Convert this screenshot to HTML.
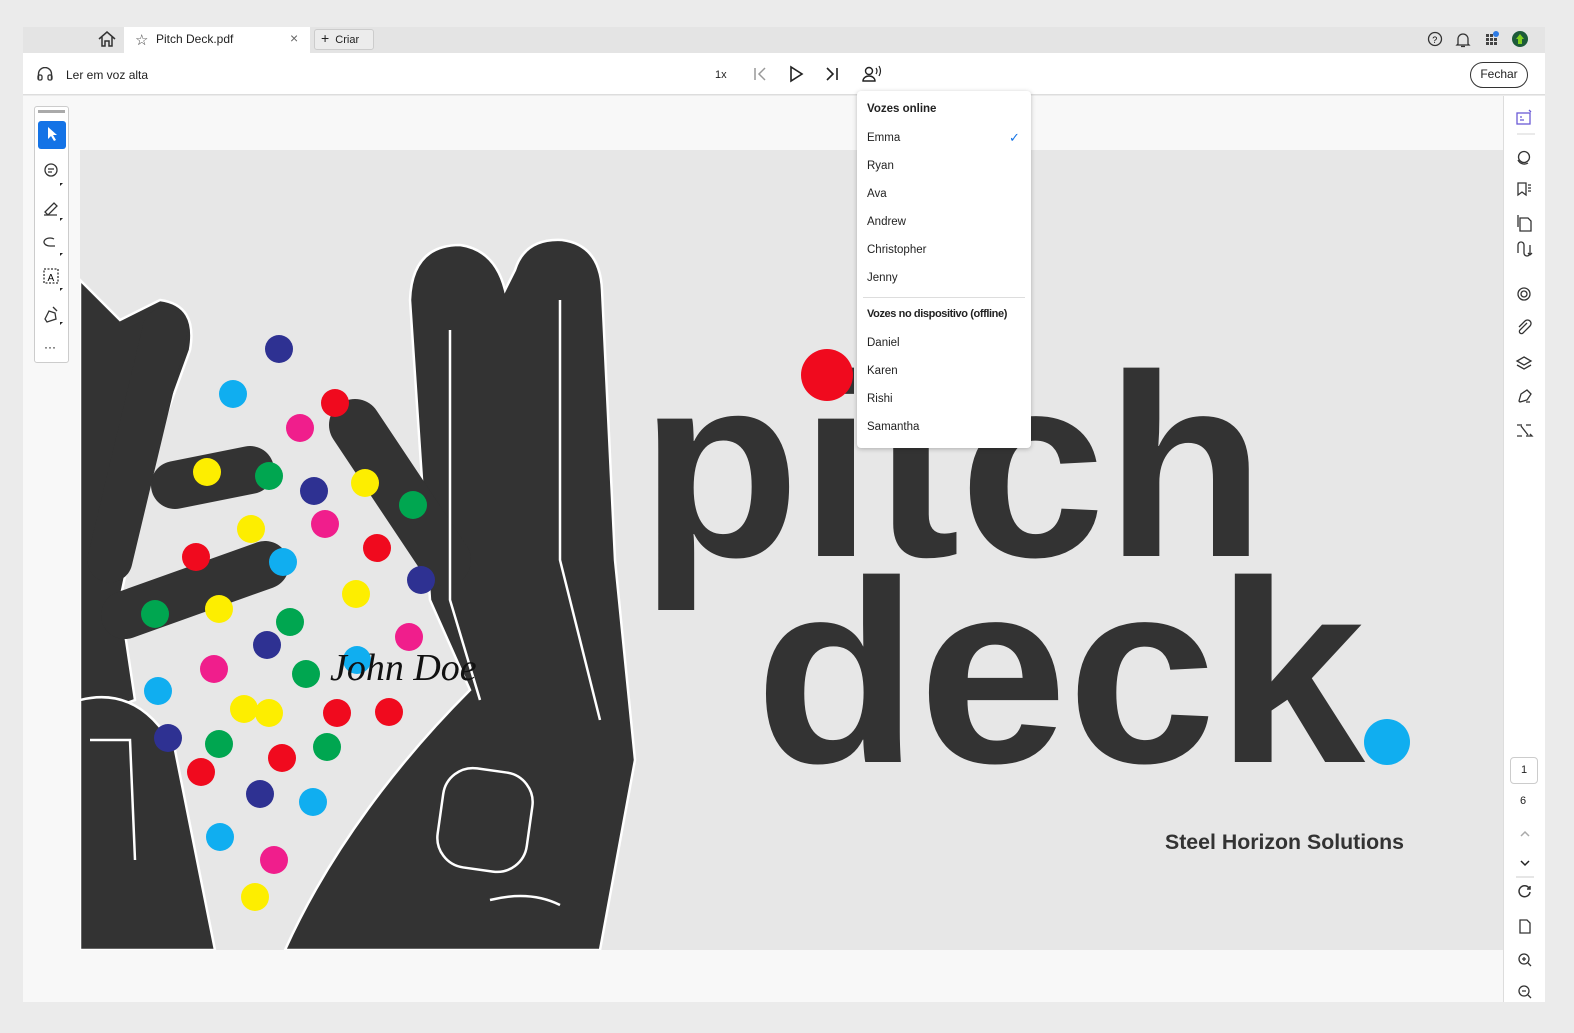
<!DOCTYPE html>
<html><head><meta charset="utf-8"><style>
*{margin:0;padding:0;box-sizing:border-box}
body{width:1574px;height:1033px;background:#ebebeb;font-family:"Liberation Sans",sans-serif;position:relative;overflow:hidden;color:#222}
.abs{position:absolute}
.tabbar{left:23px;top:27px;width:1522px;height:26px;background:#e4e4e4}
.tool{left:23px;top:53px;width:1522px;height:42px;background:#fff;border-bottom:1px solid #ddd}
.doc{left:23px;top:96px;width:1480px;height:906px;background:#f8f8f8}
.page{left:80px;top:150px;width:1423px;height:800px;background:#e7e7e7;overflow:hidden}
.rp{left:1503px;top:96px;width:42px;height:906px;background:#fff;border-left:1px solid #ddd}
.menu{left:857px;top:91px;width:174px;height:357px;background:#fff;border-radius:4px;box-shadow:0 1px 5px rgba(0,0,0,.25);font-size:11.5px}
.menu div{position:absolute;left:10px;white-space:nowrap}
.lt{left:34px;top:106px;width:35px;height:257px;background:#fff;border:1px solid #ccc;border-radius:3px}
</style></head><body>
<div class="abs tabbar"></div>
<svg class="abs" style="left:97px;top:30px" width="20" height="18" viewBox="0 0 20 18"><path d="M2 9L10 2L18 9M5 7V16H8V11H12V16H15V7" fill="none" stroke="#333" stroke-width="1.5"/></svg>
<div class="abs" style="left:124px;top:27px;width:186px;height:26px;background:#fff"></div>
<div class="abs" style="left:135px;top:31px;font-size:15px;color:#444">☆</div>
<div class="abs" style="left:156px;top:32px;font-size:12px">Pitch Deck.pdf</div>
<div class="abs" style="left:290px;top:30px;font-size:14px;color:#666">×</div>
<div class="abs" style="left:314px;top:29px;width:60px;height:21px;border:1px solid #ccc;border-radius:3px;background:#ececec;font-size:11px;padding:3px 0 0 6px"><b style="font-weight:normal;font-size:14px;line-height:11px">+</b>&nbsp; Criar</div>
<svg class="abs" style="left:1427px;top:31px" width="110" height="18"><circle cx="8" cy="8" r="6.5" fill="none" stroke="#333" stroke-width="1.3"/><text x="5.3" y="12" font-size="9" font-family="Liberation Sans">?</text><path d="M31 13V8a5 5 0 0 1 10 0v5l1 1H30zM34 15.5h4" fill="none" stroke="#333" stroke-width="1.3"/><g fill="#444"><rect x="59" y="3" width="3" height="3"/><rect x="63" y="3" width="3" height="3"/><rect x="59" y="7" width="3" height="3"/><rect x="63" y="7" width="3" height="3"/><rect x="67" y="7" width="3" height="3"/><rect x="59" y="11" width="3" height="3"/><rect x="63" y="11" width="3" height="3"/><rect x="67" y="11" width="3" height="3"/></g><circle cx="69" cy="3" r="3" fill="#2d7be5"/><circle cx="93" cy="8" r="8" fill="#1c5b3a"/><path d="M93 3l4 5h-2v5h-4V8h-2z" fill="#7fd01f"/></svg>
<div class="abs tool"></div>
<svg class="abs" style="left:37px;top:67px" width="16" height="14"><path d="M1.5 12V7a6.5 6.5 0 0 1 13 0v5" fill="none" stroke="#333" stroke-width="1.4"/><rect x="1" y="8" width="4" height="5" rx="1.5" fill="none" stroke="#333" stroke-width="1.3"/><rect x="11" y="8" width="4" height="5" rx="1.5" fill="none" stroke="#333" stroke-width="1.3"/></svg>
<div class="abs" style="left:66px;top:68px;font-size:12px">Ler em voz alta</div>
<div class="abs" style="left:715px;top:69px;font-size:11px">1x</div>
<svg class="abs" style="left:752px;top:65px" width="132" height="18"><path d="M3 3v12M13 3L7 9l6 6" fill="none" stroke="#999" stroke-width="1.5"/><path d="M39 2v14l11-7z" fill="none" stroke="#222" stroke-width="1.6"/><path d="M75 3l6 6-6 6M85 3v12" fill="none" stroke="#222" stroke-width="1.6"/><circle cx="117" cy="6" r="3.5" fill="none" stroke="#222" stroke-width="1.4"/><path d="M111 16a6 5 0 0 1 12 0z" fill="none" stroke="#222" stroke-width="1.4"/><path d="M124 3q2 3 0 6M127 1q3 5 0 10" fill="none" stroke="#222" stroke-width="1.2"/></svg>
<div class="abs" style="left:1470px;top:62px;width:58px;height:26px;border:1.5px solid #333;border-radius:13px;font-size:12px;text-align:center;line-height:23px">Fechar</div>
<div class="abs doc"></div>
<div class="abs page">
<svg width="1423" height="800" viewBox="80 150 1423 800">
<g fill="#333" stroke="#fff" stroke-width="2.5">
<path d="M80 280L120 320L160 300Q198 305 190 350L150 460L120 600L135 700L80 720Z"/>
<path d="M80 700Q140 685 175 750L215 950L80 950Z"/>
<path d="M285 950C330 850 400 760 470 690L430 600L410 300Q412 245 460 245Q495 250 505 290L515 270Q525 238 562 240Q600 245 602 290L615 560L635 760L600 950Z"/>
</g>
<g stroke="#333" stroke-linecap="round" fill="none">
<path d="M175 485L250 470" stroke-width="48"/>
<path d="M125 615L265 565" stroke-width="48"/>
<path d="M355 425L445 560" stroke-width="52"/>
<path d="M110 560L165 330" stroke-width="45"/>
</g>
<g fill="none" stroke="#fff" stroke-width="2.5">
<path d="M450 330V600L480 700"/><path d="M560 300V560L600 720"/>
<rect x="440" y="770" width="90" height="100" rx="30" transform="rotate(8 485 820)"/>
<path d="M490 900Q530 890 560 905"/>
<path d="M90 740L130 740L135 860"/>
</g>
<g>
<circle cx="279" cy="349" r="14" fill="#2e3192"/><circle cx="233" cy="394" r="14" fill="#10aef0"/><circle cx="335" cy="403" r="14" fill="#f00a1e"/><circle cx="300" cy="428" r="14" fill="#f01e8c"/><circle cx="207" cy="472" r="14" fill="#fdee00"/><circle cx="269" cy="476" r="14" fill="#00a650"/><circle cx="314" cy="491" r="14" fill="#2e3192"/><circle cx="365" cy="483" r="14" fill="#fdee00"/><circle cx="413" cy="505" r="14" fill="#00a650"/><circle cx="325" cy="524" r="14" fill="#f01e8c"/><circle cx="251" cy="529" r="14" fill="#fdee00"/><circle cx="377" cy="548" r="14" fill="#f00a1e"/><circle cx="196" cy="557" r="14" fill="#f00a1e"/><circle cx="283" cy="562" r="14" fill="#10aef0"/><circle cx="421" cy="580" r="14" fill="#2e3192"/><circle cx="356" cy="594" r="14" fill="#fdee00"/><circle cx="155" cy="614" r="14" fill="#00a650"/><circle cx="219" cy="609" r="14" fill="#fdee00"/><circle cx="290" cy="622" r="14" fill="#00a650"/><circle cx="409" cy="637" r="14" fill="#f01e8c"/><circle cx="267" cy="645" r="14" fill="#2e3192"/><circle cx="214" cy="669" r="14" fill="#f01e8c"/><circle cx="306" cy="674" r="14" fill="#00a650"/><circle cx="357" cy="660" r="14" fill="#10aef0"/><circle cx="158" cy="691" r="14" fill="#10aef0"/><circle cx="244" cy="709" r="14" fill="#fdee00"/><circle cx="269" cy="713" r="14" fill="#fdee00"/><circle cx="337" cy="713" r="14" fill="#f00a1e"/><circle cx="389" cy="712" r="14" fill="#f00a1e"/><circle cx="168" cy="738" r="14" fill="#2e3192"/><circle cx="219" cy="744" r="14" fill="#00a650"/><circle cx="327" cy="747" r="14" fill="#00a650"/><circle cx="282" cy="758" r="14" fill="#f00a1e"/><circle cx="201" cy="772" r="14" fill="#f00a1e"/><circle cx="260" cy="794" r="14" fill="#2e3192"/><circle cx="313" cy="802" r="14" fill="#10aef0"/><circle cx="220" cy="837" r="14" fill="#10aef0"/><circle cx="274" cy="860" r="14" fill="#f01e8c"/><circle cx="255" cy="897" r="14" fill="#fdee00"/>
</g>
<text x="330" y="680" font-family="Liberation Serif" font-style="italic" font-size="38" fill="#111">John Doe</text>
<text x="640" y="556" font-family="Liberation Sans" font-weight="bold" font-size="260" fill="#333" textLength="625" lengthAdjust="spacingAndGlyphs">pitch</text>
<text x="755" y="762" font-family="Liberation Sans" font-weight="bold" font-size="260" fill="#333" textLength="610" lengthAdjust="spacingAndGlyphs">deck</text>
<circle cx="827" cy="375" r="26" fill="#f00a1e"/>
<circle cx="1387" cy="742" r="23" fill="#10aef0"/>
<text x="1165" y="849" font-family="Liberation Sans" font-weight="bold" font-size="21" fill="#333" textLength="239" lengthAdjust="spacingAndGlyphs">Steel Horizon Solutions</text>
</svg></div>
<div class="abs lt">
<div class="abs" style="left:3px;top:3px;width:27px;height:3px;background:#aaa"></div>
<div class="abs" style="left:3px;top:14px;width:28px;height:28px;background:#1473e6;border-radius:3px"></div>
<svg class="abs" style="left:0;top:0" width="35" height="257"><path d="M13 20v12l3-3 3 5 2-1-3-5h4z" fill="#fff"/><g fill="none" stroke="#333" stroke-width="1.3"><circle cx="16" cy="63" r="6"/><path d="M13 62h6M13 65h4"/><path d="M10 105l9-9 3 3-9 9zM9 108h13"/><path d="M19 132a6 4 0 1 0-4 7h5"/><rect x="9" y="162" width="14" height="14" stroke-dasharray="2 1.5"/><path d="M10 212l4-8 6 2 1 6-9 3z"/><path d="M18 200l4 4"/></g><text x="12.5" y="174" font-size="10" font-family="Liberation Sans">A</text><text x="9" y="244" font-size="12">···</text><g fill="#222"><path d="M25 76l3 0-3 3zM25 111l3 0-3 3zM25 146l3 0-3 3zM25 181l3 0-3 3zM25 215l3 0-3 3"/></g></svg>
</div>
<div class="abs rp"></div>
<svg class="abs" style="left:1513px;top:105px" width="24" height="340" viewBox="0 0 24 340"><g fill="none" stroke="#333" stroke-width="1.3"><rect x="4" y="8" width="13" height="11" stroke="#6b5bd6"/><path d="M7 12h2M7 15h4M16 5l2 2" stroke="#6b5bd6"/><path d="M4 29h18" stroke="#ddd"/><circle cx="11" cy="52" r="5.5"/><path d="M5 55a7 7 0 0 0 10 3"/><path d="M5 78v12l4-3 4 3V78zM15 80h3M15 83h3M15 86h3"/><path d="M7 113h8l3 3v10H7zM5 110v12"/><path d="M5 148v-8a3 3 0 0 1 6 0v8a3 3 0 0 0 6 0v-8M17 150l-2-2M17 150l2-2"/><circle cx="11" cy="189" r="6"/><circle cx="11" cy="189" r="3"/><path d="M14 218l-7 7a2 2 0 0 0 3 3l7-7a3.5 3.5 0 0 0-5-5l-6 6"/><path d="M11 252l7 4-7 4-7-4zM4 260l7 4 7-4"/><path d="M6 296l2-7 6-4 4 4-4 6-7 2zM13 297h4"/><path d="M4 320h5M13 320h5M4 331h5M8 321l7 9M13 331h6l-2-2"/></g></svg>
<div class="abs" style="left:1510px;top:757px;width:28px;height:27px;border:1px solid #ccc;border-radius:4px;font-size:11px;text-align:center;line-height:25px">1</div>
<div class="abs" style="left:1520px;top:795px;font-size:11px">6</div>
<svg class="abs" style="left:1515px;top:825px" width="20" height="175"><g fill="none" stroke-width="1.5"><path d="M6 11l4-4 4 4" stroke="#aaa"/><path d="M6 36l4 4 4-4" stroke="#222"/><path d="M1 52h18" stroke="#ddd"/><path d="M15 67a5.5 5.5 0 1 1-1-4M15 61v3h-3" stroke="#333"/><path d="M5 95h7l3 3v10H5z" stroke="#333" stroke-width="1.3"/><circle cx="9" cy="134" r="5" stroke="#333" stroke-width="1.3"/><path d="M13 138l3 3M7 134h4M9 132v4M13 170l3 3M7 166h4" stroke="#333" stroke-width="1.3"/><circle cx="9" cy="166" r="5" stroke="#333" stroke-width="1.3"/></g></svg>
<div class="abs menu">
<div style="top:12px;font-weight:bold">Vozes online</div>
<div style="top:41px">Emma</div><div style="left:152px;top:39px;color:#1473e6;font-size:13px">✓</div>
<div style="top:69px">Ryan</div>
<div style="top:97px">Ava</div>
<div style="top:125px">Andrew</div>
<div style="top:153px">Christopher</div>
<div style="top:181px">Jenny</div>
<div style="top:206px;left:6px;width:162px;height:1px;background:#ddd"></div>
<div style="top:217px;font-weight:bold;letter-spacing:-0.4px;font-size:11px">Vozes no dispositivo (offline)</div>
<div style="top:246px">Daniel</div>
<div style="top:274px">Karen</div>
<div style="top:302px">Rishi</div>
<div style="top:330px">Samantha</div>
</div>
</body></html>
